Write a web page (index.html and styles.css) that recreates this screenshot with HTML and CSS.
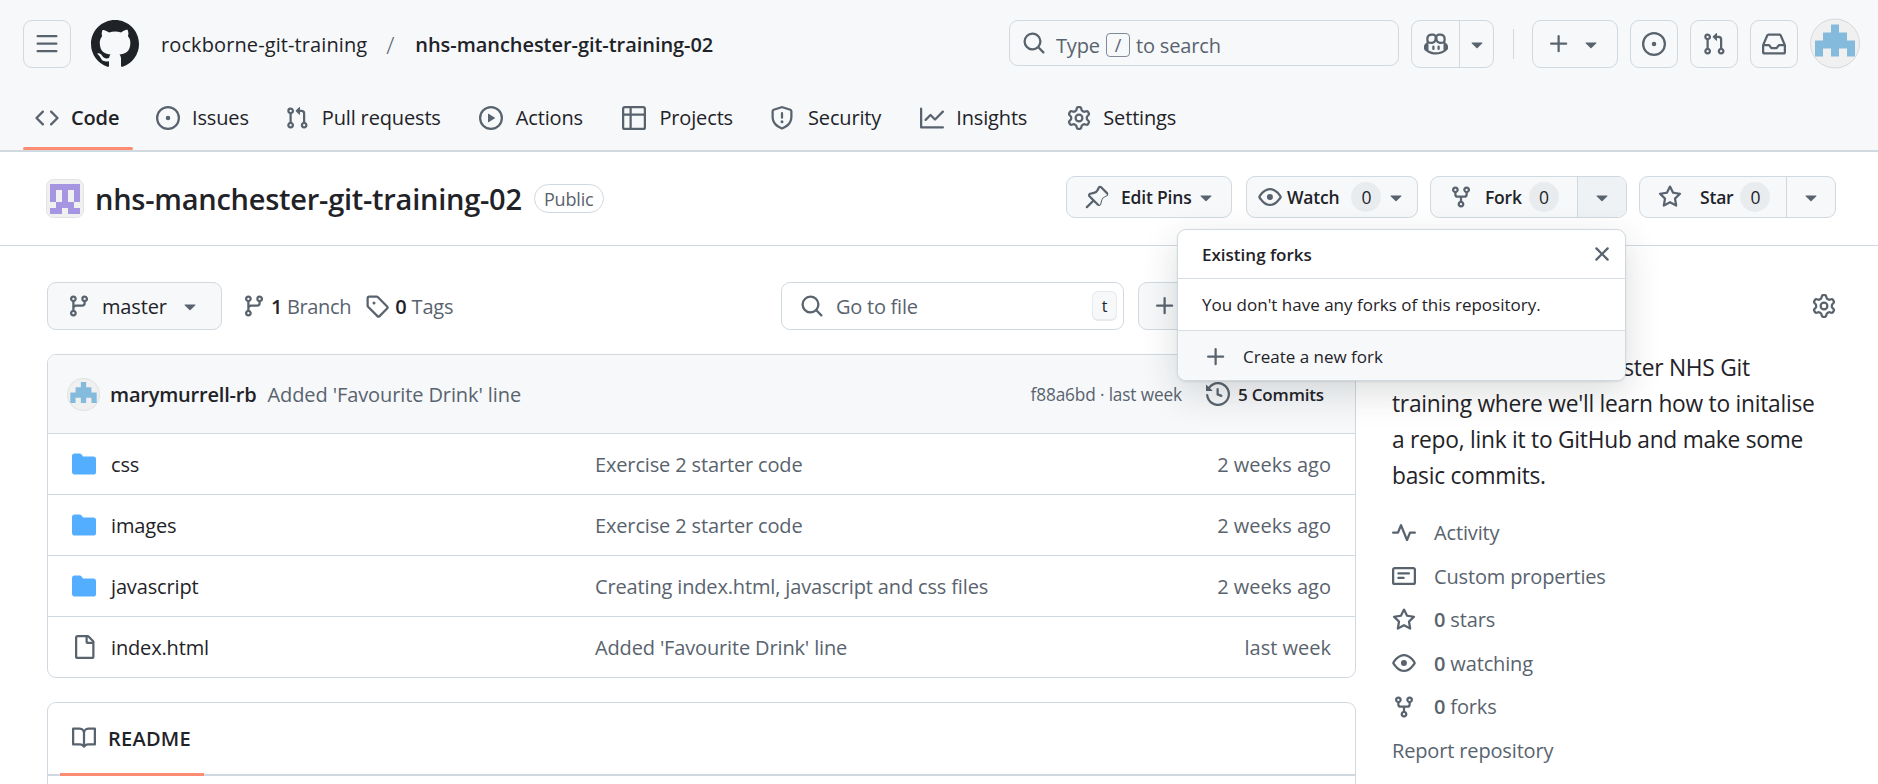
FILE: index.html
```html
<!DOCTYPE html>
<html lang="en">
<head>
<meta charset="utf-8">
<title>nhs-manchester-git-training-02</title>
<link rel="stylesheet" href="styles.css">
</head>
<body>
<svg class="sprite" width="0" height="0" aria-hidden="true">
<defs>
<symbol id="bars" viewBox="0 0 16 16"><path d="M1 2.75A.75.75 0 0 1 1.75 2h12.5a.75.75 0 0 1 0 1.5H1.75A.75.75 0 0 1 1 2.75Zm0 5A.75.75 0 0 1 1.75 7h12.5a.75.75 0 0 1 0 1.5H1.75A.75.75 0 0 1 1 7.75ZM1.75 12h12.5a.75.75 0 0 1 0 1.5H1.75a.75.75 0 0 1 0-1.5Z"/></symbol>
<symbol id="mark" viewBox="0 0 16 16"><path d="M8 0c4.42 0 8 3.58 8 8a8.013 8.013 0 0 1-5.45 7.59c-.4.08-.55-.17-.55-.38 0-.27.01-1.13.01-2.2 0-.75-.25-1.23-.54-1.48 1.78-.2 3.65-.88 3.65-3.95 0-.88-.31-1.59-.82-2.15.08-.2.36-1.02-.08-2.12 0 0-.67-.22-2.2.82-.64-.18-1.32-.27-2-.27-.68 0-1.36.09-2 .27-1.53-1.03-2.2-.82-2.2-.82-.44 1.1-.16 1.92-.08 2.12-.51.56-.82 1.28-.82 2.15 0 3.06 1.86 3.75 3.64 3.95-.23.2-.44.55-.51 1.07-.46.21-1.61.55-2.33-.66-.15-.24-.6-.83-1.23-.82-.67.01-.27.38.01.53.34.19.73.9.82 1.13.16.45.68 1.31 2.69.94 0 .67.01 1.3.01 1.49 0 .21-.15.45-.55.38A7.995 7.995 0 0 1 0 8c0-4.42 3.58-8 8-8Z"/></symbol>
<symbol id="search" viewBox="0 0 16 16"><path d="M10.68 11.74a6 6 0 0 1-7.922-8.982 6 6 0 0 1 8.982 7.922l3.04 3.04a.749.749 0 0 1-.326 1.275.749.749 0 0 1-.734-.215ZM11.5 7a4.499 4.499 0 1 0-8.997 0A4.499 4.499 0 0 0 11.5 7Z"/></symbol>
<symbol id="code" viewBox="0 0 16 16"><path d="m11.28 3.22 4.25 4.25a.75.75 0 0 1 0 1.06l-4.25 4.25a.749.749 0 0 1-1.275-.326.749.749 0 0 1 .215-.734L13.94 8l-3.72-3.72a.749.749 0 0 1 .326-1.275.749.749 0 0 1 .734.215Zm-6.56 0a.751.751 0 0 1 1.042.018.751.751 0 0 1 .018 1.042L2.06 8l3.72 3.72a.749.749 0 0 1-.326 1.275.749.749 0 0 1-.734-.215L.47 8.53a.75.75 0 0 1 0-1.06Z"/></symbol>
<symbol id="issue" viewBox="0 0 16 16"><path d="M8 9.5a1.5 1.5 0 1 0 0-3 1.5 1.5 0 0 0 0 3Z"/><path d="M8 0a8 8 0 1 1 0 16A8 8 0 0 1 8 0ZM1.5 8a6.5 6.5 0 1 0 13 0 6.5 6.5 0 0 0-13 0Z"/></symbol>
<symbol id="pr" viewBox="0 0 16 16"><path d="M1.5 3.25a2.25 2.25 0 1 1 3 2.122v5.256a2.251 2.251 0 1 1-1.5 0V5.372A2.25 2.25 0 0 1 1.5 3.25Zm5.677-.177L9.573.677A.25.25 0 0 1 10 .854V2.5h1A2.5 2.5 0 0 1 13.5 5v5.628a2.251 2.251 0 1 1-1.5 0V5a1 1 0 0 0-1-1h-1v1.646a.25.25 0 0 1-.427.177L7.177 3.427a.25.25 0 0 1 0-.354ZM3.75 2.5a.75.75 0 1 0 0 1.5.75.75 0 0 0 0-1.5Zm0 9.5a.75.75 0 1 0 0 1.5.75.75 0 0 0 0-1.5Zm8.25.75a.75.75 0 1 0 1.5 0 .75.75 0 0 0-1.5 0Z"/></symbol>
<symbol id="play" viewBox="0 0 16 16"><path d="M8 0a8 8 0 1 1 0 16A8 8 0 0 1 8 0ZM1.5 8a6.5 6.5 0 1 0 13 0 6.5 6.5 0 0 0-13 0Zm4.879-2.773 4.264 2.559a.25.25 0 0 1 0 .428l-4.264 2.559A.25.25 0 0 1 6 10.559V5.442a.25.25 0 0 1 .379-.215Z"/></symbol>
<symbol id="table" viewBox="0 0 16 16"><path d="M0 1.75C0 .784.784 0 1.75 0h12.5C15.216 0 16 .784 16 1.75v12.5A1.75 1.75 0 0 1 14.25 16H1.75A1.75 1.75 0 0 1 0 14.25ZM6.5 6.5v8h7.75a.25.25 0 0 0 .25-.25V6.5Zm8-1.5V1.75a.25.25 0 0 0-.25-.25H6.5V5Zm-13 1.5v7.75c0 .138.112.25.25.25H5v-8ZM5 5V1.5H1.75a.25.25 0 0 0-.25.25V5Z"/></symbol>
<symbol id="shield" viewBox="0 0 16 16"><path d="M7.467.133a1.748 1.748 0 0 1 1.066 0l5.25 1.68A1.75 1.75 0 0 1 15 3.48V7c0 1.566-.32 3.182-1.303 4.682-.983 1.498-2.585 2.813-5.032 3.855a1.697 1.697 0 0 1-1.33 0c-2.447-1.042-4.049-2.357-5.032-3.855C1.32 10.182 1 8.566 1 7V3.48a1.75 1.75 0 0 1 1.217-1.667Zm.61 1.429a.25.25 0 0 0-.153 0l-5.25 1.68a.25.25 0 0 0-.174.238V7c0 1.358.275 2.666 1.057 3.86.784 1.194 2.121 2.34 4.366 3.297a.196.196 0 0 0 .154 0c2.245-.956 3.582-2.104 4.366-3.298C13.225 9.666 13.5 8.36 13.5 7V3.48a.251.251 0 0 0-.174-.237l-5.25-1.68ZM8.75 4.75v3a.75.75 0 0 1-1.5 0v-3a.75.75 0 0 1 1.5 0ZM9 10.5a1 1 0 1 1-2 0 1 1 0 0 1 2 0Z"/></symbol>
<symbol id="graph" viewBox="0 0 16 16"><path d="M1.5 1.75V13.5h13.75a.75.75 0 0 1 0 1.5H.75a.75.75 0 0 1-.75-.75V1.75a.75.75 0 0 1 1.5 0Zm14.28 2.53-5.25 5.25a.75.75 0 0 1-1.06 0L7 7.06 4.28 9.78a.751.751 0 0 1-1.042-.018.751.751 0 0 1-.018-1.042l3.25-3.25a.75.75 0 0 1 1.06 0L10 7.94l4.72-4.72a.751.751 0 0 1 1.042.018.751.751 0 0 1 .018 1.042Z"/></symbol>
<symbol id="gear" viewBox="0 0 16 16"><path d="M8 0a8.2 8.2 0 0 1 .701.031C9.444.095 9.99.645 10.16 1.29l.288 1.107c.018.066.079.158.212.224.231.114.454.243.668.386.123.082.233.09.299.071l1.103-.303c.644-.176 1.392.021 1.82.63.27.385.506.792.704 1.218.315.675.111 1.422-.364 1.891l-.814.806c-.049.048-.098.147-.088.294.016.257.016.515 0 .772-.01.147.038.246.088.294l.814.806c.475.469.679 1.216.364 1.891a7.977 7.977 0 0 1-.704 1.217c-.428.61-1.176.807-1.82.63l-1.102-.302c-.067-.019-.177-.011-.3.071a5.909 5.909 0 0 1-.668.386c-.133.066-.194.158-.211.224l-.29 1.106c-.168.646-.715 1.196-1.458 1.26a8.006 8.006 0 0 1-1.402 0c-.743-.064-1.289-.614-1.458-1.26l-.289-1.106c-.018-.066-.079-.158-.212-.224a5.738 5.738 0 0 1-.668-.386c-.123-.082-.233-.09-.299-.071l-1.103.303c-.644.176-1.392-.021-1.82-.63a8.12 8.12 0 0 1-.704-1.218c-.315-.675-.111-1.422.363-1.891l.815-.806c.05-.048.098-.147.088-.294a6.214 6.214 0 0 1 0-.772c.01-.147-.038-.246-.088-.294l-.815-.806C.635 6.045.431 5.298.746 4.623a7.92 7.92 0 0 1 .704-1.217c.428-.61 1.176-.807 1.82-.63l1.102.302c.067.019.177.011.3-.071.214-.143.437-.272.668-.386.133-.066.194-.158.211-.224l.29-1.106C6.009.645 6.556.095 7.299.03 7.53.01 7.764 0 8 0Zm-.571 1.525c-.036.003-.108.036-.137.146l-.289 1.105c-.147.561-.549.967-.998 1.189-.173.086-.34.183-.5.29-.417.278-.97.423-1.529.27l-1.103-.303c-.109-.03-.175.016-.195.045-.22.312-.412.644-.573.99-.014.031-.021.11.059.19l.815.806c.411.406.562.957.53 1.456a4.709 4.709 0 0 0 0 .582c.032.499-.119 1.05-.53 1.456l-.815.806c-.081.08-.073.159-.059.19.162.346.353.677.573.989.02.03.085.076.195.046l1.102-.303c.56-.153 1.113-.008 1.53.27.161.107.328.204.501.29.447.222.85.629.997 1.189l.289 1.105c.029.109.101.143.137.146a6.6 6.6 0 0 0 1.142 0c.036-.003.108-.036.137-.146l.289-1.105c.147-.561.549-.967.998-1.189.173-.086.34-.183.5-.29.417-.278.97-.423 1.529-.27l1.103.303c.109.029.175-.016.195-.045.22-.313.411-.644.573-.99.014-.031.021-.11-.059-.19l-.815-.806c-.411-.406-.562-.957-.53-1.456a4.709 4.709 0 0 0 0-.582c-.032-.499.119-1.05.53-1.456l.815-.806c.081-.08.073-.159.059-.19a6.464 6.464 0 0 0-.573-.989c-.02-.03-.085-.076-.195-.046l-1.102.303c-.56.153-1.113.008-1.53-.27a4.44 4.44 0 0 0-.501-.29c-.447-.222-.85-.629-.997-1.189l-.289-1.105c-.029-.11-.101-.143-.137-.146a6.6 6.6 0 0 0-1.142 0ZM11 8a3 3 0 1 1-6 0 3 3 0 0 1 6 0ZM9.5 8a1.5 1.5 0 1 0-3.001.001A1.5 1.5 0 0 0 9.5 8Z"/></symbol>
<symbol id="plus" viewBox="0 0 16 16"><path d="M7.75 2a.75.75 0 0 1 .75.75V7h4.25a.75.75 0 0 1 0 1.5H8.5v4.25a.75.75 0 0 1-1.5 0V8.5H2.75a.75.75 0 0 1 0-1.5H7V2.75A.75.75 0 0 1 7.75 2Z"/></symbol>
<symbol id="tri" viewBox="0 0 16 16"><path d="m4.427 7.427 3.396 3.396a.25.25 0 0 0 .354 0l3.396-3.396A.25.25 0 0 0 11.396 7H4.604a.25.25 0 0 0-.177.427Z"/></symbol>
<symbol id="inbox" viewBox="0 0 16 16"><path d="M2.8 2.06A1.75 1.75 0 0 1 4.41 1h7.18c.7 0 1.333.417 1.61 1.06l2.74 6.395c.04.093.06.194.06.295v4.5A1.75 1.75 0 0 1 14.25 15H1.75A1.75 1.75 0 0 1 0 13.25v-4.5c0-.101.02-.202.06-.295Zm1.61.44a.25.25 0 0 0-.23.152L1.887 8H4.75a.75.75 0 0 1 .6.3L6.625 10h2.75l1.275-1.7a.75.75 0 0 1 .6-.3h2.863L11.82 2.652a.25.25 0 0 0-.23-.152Zm10.09 7h-2.875l-1.275 1.7a.75.75 0 0 1-.6.3h-3.5a.75.75 0 0 1-.6-.3L4.375 9.5H1.5v3.75c0 .138.112.25.25.25h12.5a.25.25 0 0 0 .25-.25Z"/></symbol>
<symbol id="copilot" viewBox="0 0 16 16"><path d="M7.998 15.035c-4.562 0-7.873-2.914-7.998-3.749V9.338c.085-.628.677-1.686 1.588-2.065.013-.07.024-.143.036-.218.029-.183.06-.384.126-.612-.201-.508-.254-1.084-.254-1.656 0-.87.128-1.769.693-2.484.579-.733 1.494-1.124 2.724-1.261 1.206-.134 2.262.034 2.944.765.05.053.096.108.139.165.044-.057.094-.112.143-.165.682-.731 1.738-.899 2.944-.765 1.23.137 2.145.528 2.724 1.261.566.715.693 1.614.693 2.484 0 .572-.053 1.148-.254 1.656.066.228.098.429.126.612.012.076.024.148.037.218.924.385 1.522 1.471 1.591 2.095v1.872c0 .766-3.351 3.795-8.002 3.795Zm0-1.485c2.28 0 4.584-1.11 5.002-1.433V7.862l-.023-.116c-.49.21-1.075.291-1.727.291-1.146 0-2.059-.327-2.71-.991A3.222 3.222 0 0 1 8 6.303a3.24 3.24 0 0 1-.544.743c-.65.664-1.563.991-2.71.991-.652 0-1.236-.081-1.727-.291l-.023.116v4.255c.419.323 2.722 1.433 5.002 1.433ZM6.762 2.83c-.193-.206-.637-.413-1.682-.297-1.019.113-1.479.404-1.713.7-.247.312-.369.789-.369 1.554 0 .793.129 1.171.308 1.371.162.181.519.379 1.442.379.853 0 1.339-.235 1.638-.54.315-.322.527-.827.617-1.553.117-.935-.037-1.395-.241-1.614Zm4.155-.297c-1.044-.116-1.488.091-1.681.297-.204.219-.359.679-.242 1.614.091.726.303 1.231.618 1.553.299.305.784.54 1.638.54.922 0 1.28-.198 1.442-.379.179-.2.308-.578.308-1.371 0-.765-.123-1.242-.37-1.554-.233-.296-.693-.587-1.713-.7Z"/><path d="M6.25 9.037a.75.75 0 0 1 .75.75v1.501a.75.75 0 0 1-1.5 0V9.787a.75.75 0 0 1 .75-.75Zm4.25.75v1.501a.75.75 0 0 1-1.5 0V9.787a.75.75 0 0 1 1.5 0Z"/></symbol>
<symbol id="pin" viewBox="0 0 16 16"><path d="m11.294.984 3.722 3.722a1.75 1.75 0 0 1-.504 2.826l-1.327.613a3.089 3.089 0 0 0-1.707 2.084l-.584 2.454c-.317 1.332-1.972 1.8-2.94.832L5.75 11.311 1.78 15.28a.749.749 0 0 1-1.275-.326.749.749 0 0 1 .215-.734L4.69 10.25 2.487 8.047c-.968-.968-.5-2.623.832-2.94l2.454-.584a3.08 3.08 0 0 0 2.084-1.707l.613-1.327a1.75 1.75 0 0 1 2.824-.505Zm-1.06 1.06a.25.25 0 0 0-.404.072l-.613 1.327a4.58 4.58 0 0 1-3.098 2.537l-2.454.584a.25.25 0 0 0-.119.42l6.13 6.13a.25.25 0 0 0 .42-.119l.584-2.454a4.58 4.58 0 0 1 2.537-3.098l1.327-.613a.25.25 0 0 0 .072-.404Z"/></symbol>
<symbol id="eye" viewBox="0 0 16 16"><path d="M8 2c1.981 0 3.671.992 4.933 2.078 1.27 1.091 2.187 2.345 2.637 3.023a1.62 1.62 0 0 1 0 1.798c-.45.678-1.367 1.932-2.637 3.023C11.67 13.008 9.981 14 8 14c-1.981 0-3.671-.992-4.933-2.078C1.797 10.83.88 9.576.43 8.898a1.62 1.62 0 0 1 0-1.798c.45-.677 1.367-1.931 2.637-3.022C4.33 2.992 6.019 2 8 2ZM1.679 7.932a.12.12 0 0 0 0 .136c.411.622 1.241 1.75 2.366 2.717C5.176 11.758 6.527 12.5 8 12.5c1.473 0 2.825-.742 3.955-1.715 1.124-.967 1.954-2.096 2.366-2.717a.12.12 0 0 0 0-.136c-.412-.621-1.242-1.75-2.366-2.717C10.824 4.242 9.473 3.5 8 3.5c-1.473 0-2.825.742-3.955 1.715-1.124.967-1.954 2.096-2.366 2.717ZM8 10a2 2 0 1 1-.001-3.999A2 2 0 0 1 8 10Z"/></symbol>
<symbol id="fork" viewBox="0 0 16 16"><path d="M5 5.372v.878c0 .414.336.75.75.75h4.5a.75.75 0 0 0 .75-.75v-.878a2.25 2.25 0 1 1 1.5 0v.878a2.25 2.25 0 0 1-2.25 2.25h-1.5v2.128a2.251 2.251 0 1 1-1.5 0V8.5h-1.5A2.25 2.25 0 0 1 3.5 6.25v-.878a2.25 2.25 0 1 1 1.5 0ZM5 3.25a.75.75 0 1 0-1.5 0 .75.75 0 0 0 1.5 0Zm6.75.75a.75.75 0 1 0 0-1.5.75.75 0 0 0 0 1.5Zm-3 8.75a.75.75 0 1 0-1.5 0 .75.75 0 0 0 1.5 0Z"/></symbol>
<symbol id="star" viewBox="0 0 16 16"><path d="M8 .25a.75.75 0 0 1 .673.418l1.882 3.815 4.21.612a.75.75 0 0 1 .416 1.279l-3.046 2.97.719 4.192a.751.751 0 0 1-1.088.791L8 12.347l-3.766 1.98a.75.75 0 0 1-1.088-.79l.72-4.194L.818 6.374a.75.75 0 0 1 .416-1.28l4.21-.611L7.327.668A.75.75 0 0 1 8 .25Zm0 2.445L6.615 5.5a.75.75 0 0 1-.564.41l-3.097.45 2.24 2.184a.75.75 0 0 1 .216.664l-.528 3.084 2.769-1.456a.75.75 0 0 1 .698 0l2.77 1.456-.53-3.084a.75.75 0 0 1 .216-.664l2.24-2.183-3.096-.45a.75.75 0 0 1-.564-.41L8 2.694Z"/></symbol>
<symbol id="x" viewBox="0 0 16 16"><path d="M3.72 3.72a.75.75 0 0 1 1.06 0L8 6.94l3.22-3.22a.749.749 0 0 1 1.275.326.749.749 0 0 1-.215.734L9.06 8l3.22 3.22a.749.749 0 0 1-.326 1.275.749.749 0 0 1-.734-.215L8 9.06l-3.22 3.22a.751.751 0 0 1-1.042-.018.751.751 0 0 1-.018-1.042L6.94 8 3.72 4.78a.75.75 0 0 1 0-1.06Z"/></symbol>
<symbol id="branch" viewBox="0 0 16 16"><path d="M9.5 3.25a2.25 2.25 0 1 1 3 2.122V6A2.5 2.5 0 0 1 10 8.5H6a1 1 0 0 0-1 1v1.128a2.251 2.251 0 1 1-1.5 0V5.372a2.25 2.25 0 1 1 1.5 0v1.836A2.493 2.493 0 0 1 6 7h4a1 1 0 0 0 1-1v-.628A2.25 2.25 0 0 1 9.5 3.25Zm-6 0a.75.75 0 1 0 1.5 0 .75.75 0 0 0-1.5 0Zm8.25-.75a.75.75 0 1 0 0 1.5.75.75 0 0 0 0-1.5ZM4.25 12a.75.75 0 1 0 0 1.5.75.75 0 0 0 0-1.5Z"/></symbol>
<symbol id="tag" viewBox="0 0 16 16"><path d="M1 7.775V2.75C1 1.784 1.784 1 2.75 1h5.025c.464 0 .91.184 1.238.513l6.25 6.25a1.75 1.75 0 0 1 0 2.474l-5.026 5.026a1.75 1.75 0 0 1-2.474 0l-6.25-6.25A1.752 1.752 0 0 1 1 7.775Zm1.5 0c0 .066.026.13.073.177l6.25 6.25a.25.25 0 0 0 .354 0l5.025-5.025a.25.25 0 0 0 0-.354l-6.25-6.25a.25.25 0 0 0-.177-.073H2.75a.25.25 0 0 0-.25.25ZM6 5a1 1 0 1 1 0 2 1 1 0 0 1 0-2Z"/></symbol>
<symbol id="history" viewBox="0 0 16 16"><path d="m.427 1.927 1.215 1.215a8.002 8.002 0 1 1-1.6 5.685.75.75 0 1 1 1.493-.154 6.5 6.5 0 1 0 1.18-4.458l1.358 1.358A.25.25 0 0 1 3.896 6H.25A.25.25 0 0 1 0 5.75V2.104a.25.25 0 0 1 .427-.177ZM7.75 4a.75.75 0 0 1 .75.75v2.992l2.028.812a.75.75 0 0 1-.557 1.392l-2.5-1A.751.751 0 0 1 7 8.25v-3.5A.75.75 0 0 1 7.75 4Z"/></symbol>
<symbol id="folder" viewBox="0 0 16 16"><path d="M1.75 1A1.75 1.75 0 0 0 0 2.75v10.5C0 14.216.784 15 1.75 15h12.5A1.75 1.75 0 0 0 16 13.25v-8.5A1.75 1.75 0 0 0 14.25 3H7.5a.25.25 0 0 1-.2-.1l-.9-1.2C6.07 1.26 5.55 1 5 1H1.75Z"/></symbol>
<symbol id="file" viewBox="0 0 16 16"><path d="M2 1.75C2 .784 2.784 0 3.75 0h6.586c.464 0 .909.184 1.237.513l2.914 2.914c.329.328.513.773.513 1.237v9.586A1.75 1.75 0 0 1 13.25 16h-9.5A1.75 1.75 0 0 1 2 14.25Zm1.75-.25a.25.25 0 0 0-.25.25v12.5c0 .138.112.25.25.25h9.5a.25.25 0 0 0 .25-.25V6h-2.75A1.75 1.75 0 0 1 9 4.25V1.5Zm6.75.062V4.25c0 .138.112.25.25.25h2.688l-.011-.013-2.914-2.914-.013-.011Z"/></symbol>
<symbol id="book" viewBox="0 0 16 16"><path d="M0 1.75A.75.75 0 0 1 .75 1h4.253c1.227 0 2.317.59 3 1.501A3.743 3.743 0 0 1 11.006 1h4.245a.75.75 0 0 1 .75.75v10.5a.75.75 0 0 1-.75.75h-4.507a2.25 2.25 0 0 0-1.591.659l-.622.621a.75.75 0 0 1-1.06 0l-.622-.621A2.25 2.25 0 0 0 5.258 13H.75a.75.75 0 0 1-.75-.75Zm7.251 10.324.004-5.073-.002-2.253A2.25 2.25 0 0 0 5.003 2.5H1.5v9h3.757a3.75 3.75 0 0 1 1.994.574ZM8.755 4.75l-.004 7.322a3.752 3.752 0 0 1 1.992-.572H14.5v-9h-3.495a2.25 2.25 0 0 0-2.25 2.25Z"/></symbol>
<symbol id="pulse" viewBox="0 0 16 16"><path d="M6 2c.306 0 .582.187.696.471L10 10.731l1.304-3.26A.751.751 0 0 1 12 7h3.25a.75.75 0 0 1 0 1.5h-2.742l-1.812 4.528a.751.751 0 0 1-1.392 0L6 4.77 4.696 8.03A.75.75 0 0 1 4 8.5H.75a.75.75 0 0 1 0-1.5h2.742l1.812-4.529A.751.751 0 0 1 6 2Z"/></symbol>
<symbol id="note" viewBox="0 0 16 16"><path d="M0 3.75C0 2.784.784 2 1.75 2h12.5c.966 0 1.75.784 1.75 1.75v8.5A1.75 1.75 0 0 1 14.25 14H1.75A1.75 1.75 0 0 1 0 12.25Zm1.75-.25a.25.25 0 0 0-.25.25v8.5c0 .138.112.25.25.25h12.5a.25.25 0 0 0 .25-.25v-8.5a.25.25 0 0 0-.25-.25ZM3.5 6.25a.75.75 0 0 1 .75-.75h7a.75.75 0 0 1 0 1.5h-7a.75.75 0 0 1-.75-.75ZM4.25 8.5h3.5a.75.75 0 0 1 0 1.5h-3.5a.75.75 0 0 1 0-1.5Z"/></symbol>
<symbol id="identicon-blue" viewBox="0 0 50 50"><circle cx="25" cy="25" r="24.5" fill="#f0f0f0" stroke="#d5d8da"/><path fill="#84bbdc" d="M21 6h8v8h8v8h8v16h-8v-8h-8v8h-8v-8h-8v8H5V22h8v-8h8Z"/></symbol>
<symbol id="identicon-purple" viewBox="0 0 38 39"><rect x=".5" y=".5" width="37" height="38" rx="7" fill="#f0f0f0" stroke="#e1e4e8"/><path fill="#a695e0" d="M4 5h30v6H4zM4 11h6v12H4zM16 11h6v12h-6zM28 11h6v12h-6zM10 23h18v6H10zM4 29h12v6H4zM22 29h12v6H22z"/></symbol>
</defs>
</svg>

<header class="app-header">
  <div class="top-row">
    <button class="icon-btn menu-btn" type="button"><svg class="ic"><use href="#bars"/></svg></button>
    <svg class="logo"><use href="#mark"/></svg>
    <nav class="crumbs">
      <span class="crumb-owner">rockborne-git-training</span>
      <span class="crumb-sep">/</span>
      <span class="crumb-repo">nhs-manchester-git-training-02</span>
    </nav>
    <div class="search-box">
      <svg class="ic"><use href="#search"/></svg>
      <span class="search-text">Type <kbd class="slash">/</kbd> to search</span>
    </div>
    <div class="copilot-group">
      <span class="cop-main"><svg class="ic"><use href="#copilot"/></svg></span>
      <span class="cop-drop"><svg class="ic"><use href="#tri"/></svg></span>
    </div>
    <span class="top-sep"></span>
    <button class="icon-btn plus-btn" type="button"><svg class="ic"><use href="#plus"/></svg><svg class="ic"><use href="#tri"/></svg></button>
    <button class="icon-btn" type="button"><svg class="ic"><use href="#issue"/></svg></button>
    <button class="icon-btn" type="button"><svg class="ic"><use href="#pr"/></svg></button>
    <button class="icon-btn" type="button"><svg class="ic"><use href="#inbox"/></svg></button>
    <svg class="user-avatar"><use href="#identicon-blue"/></svg>
  </div>
  <nav class="tabs">
    <a class="tab tab-active"><svg class="ic"><use href="#code"/></svg><span>Code</span></a>
    <a class="tab"><svg class="ic"><use href="#issue"/></svg><span>Issues</span></a>
    <a class="tab"><svg class="ic"><use href="#pr"/></svg><span>Pull requests</span></a>
    <a class="tab"><svg class="ic"><use href="#play"/></svg><span>Actions</span></a>
    <a class="tab"><svg class="ic"><use href="#table"/></svg><span>Projects</span></a>
    <a class="tab"><svg class="ic"><use href="#shield"/></svg><span>Security</span></a>
    <a class="tab"><svg class="ic"><use href="#graph"/></svg><span>Insights</span></a>
    <a class="tab"><svg class="ic"><use href="#gear"/></svg><span>Settings</span></a>
  </nav>
</header>

<section class="repo-head">
  <svg class="repo-avatar"><use href="#identicon-purple"/></svg>
  <h1 class="repo-name">nhs-manchester-git-training-02</h1>
  <span class="public-badge">Public</span>
  <div class="repo-actions">
    <button class="act-btn pins-btn" type="button"><svg class="ic"><use href="#pin"/></svg><span class="act-label">Edit Pins</span><svg class="ic tri"><use href="#tri"/></svg></button>
    <button class="act-btn watch-btn" type="button"><svg class="ic"><use href="#eye"/></svg><span class="act-label">Watch</span><span class="count">0</span><svg class="ic tri"><use href="#tri"/></svg></button>
    <div class="split fork-split">
      <button class="split-main" type="button"><svg class="ic"><use href="#fork"/></svg><span class="act-label">Fork</span><span class="count">0</span></button>
      <button class="split-drop split-open" type="button"><svg class="ic tri"><use href="#tri"/></svg></button>
    </div>
    <div class="split star-split">
      <button class="split-main" type="button"><svg class="ic"><use href="#star"/></svg><span class="act-label">Star</span><span class="count">0</span></button>
      <button class="split-drop" type="button"><svg class="ic tri"><use href="#tri"/></svg></button>
    </div>
  </div>
  <div class="fork-pop">
    <div class="pop-head"><span class="pop-title">Existing forks</span><svg class="ic"><use href="#x"/></svg></div>
    <div class="pop-body">You don't have any forks of this repository.</div>
    <div class="pop-foot"><svg class="ic"><use href="#plus"/></svg><span>Create a new fork</span></div>
  </div>
</section>

<main class="layout">
  <div class="main-col">
    <div class="file-nav">
      <button class="branch-btn" type="button"><svg class="ic"><use href="#branch"/></svg><span class="branch-name">master</span><svg class="ic tri"><use href="#tri"/></svg></button>
      <span class="nav-stat stat-branch"><svg class="ic"><use href="#branch"/></svg><span><b>1</b> Branch</span></span>
      <span class="nav-stat stat-tag"><svg class="ic"><use href="#tag"/></svg><span><b>0</b> Tags</span></span>
      <div class="goto">
        <svg class="ic"><use href="#search"/></svg>
        <span class="goto-text">Go to file</span>
        <kbd class="goto-key">t</kbd>
      </div>
      <button class="add-btn" type="button"><svg class="ic"><use href="#plus"/></svg></button>
    </div>

    <div class="file-table">
      <div class="commit-row">
        <svg class="commit-avatar"><use href="#identicon-blue"/></svg>
        <span class="commit-author">marymurrell-rb</span>
        <span class="commit-msg">Added 'Favourite Drink' line</span>
        <span class="commit-meta">f88a6bd · last week</span>
        <span class="commit-count"><svg class="ic"><use href="#history"/></svg><span>5 Commits</span></span>
      </div>
      <div class="file-row"><svg class="ic folder"><use href="#folder"/></svg><span class="file-name">css</span><span class="file-msg">Exercise 2 starter code</span><span class="file-date">2 weeks ago</span></div>
      <div class="file-row"><svg class="ic folder"><use href="#folder"/></svg><span class="file-name">images</span><span class="file-msg">Exercise 2 starter code</span><span class="file-date">2 weeks ago</span></div>
      <div class="file-row"><svg class="ic folder"><use href="#folder"/></svg><span class="file-name">javascript</span><span class="file-msg">Creating index.html, javascript and css files</span><span class="file-date">2 weeks ago</span></div>
      <div class="file-row"><svg class="ic"><use href="#file"/></svg><span class="file-name">index.html</span><span class="file-msg">Added 'Favourite Drink' line</span><span class="file-date">last week</span></div>
    </div>

    <div class="readme">
      <div class="readme-head"><a class="readme-tab"><svg class="ic"><use href="#book"/></svg><span>README</span></a></div>
    </div>
  </div>

  <aside class="side-col">
    <div class="about-head"><svg class="ic"><use href="#gear"/></svg></div>
    <p class="about-text">Resources for Manchester NHS Git<br>training where we'll learn how to initalise<br>a repo, link it to GitHub and make some<br>basic commits.</p>
    <ul class="side-list">
      <li class="side-item"><svg class="ic"><use href="#pulse"/></svg><span>Activity</span></li>
      <li class="side-item"><svg class="ic"><use href="#note"/></svg><span>Custom properties</span></li>
      <li class="side-item"><svg class="ic"><use href="#star"/></svg><span><b>0</b> stars</span></li>
      <li class="side-item"><svg class="ic"><use href="#eye"/></svg><span><b>0</b> watching</span></li>
      <li class="side-item"><svg class="ic"><use href="#fork"/></svg><span><b>0</b> forks</span></li>
      <li class="side-item report">Report repository</li>
    </ul>
  </aside>
</main>
</body>
</html>
```

FILE: styles.css
```css
* { box-sizing: border-box; }
html, body { margin: 0; height: 784px; overflow: hidden; }
body {
  font-family: "Open Sans", "Noto Sans", sans-serif;
  font-size: 20px;
  letter-spacing: -0.15px;
  color: #1f2328;
  background: #fff;
}
button { font: inherit; letter-spacing: inherit; color: inherit; background: none; padding: 0; cursor: pointer; }
h1, h2, p, ul { margin: 0; padding: 0; }
ul { list-style: none; }
b { font-weight: 600; }
.sprite { position: absolute; }
.ic { width: 24px; height: 24px; fill: #59636e; flex: none; display: block; }
.tri { width: 24px; height: 24px; }

/* header */
.app-header { height: 152px; background: #f6f8fa; border-bottom: 2px solid #d1d9e0; }
.top-row { height: 88px; padding: 20px 0 0 23px; display: flex; align-items: flex-start; }
.icon-btn {
  width: 48px; height: 48px; border: 1px solid #d1d9e0; border-radius: 9px; flex: none;
  display: flex; align-items: center; justify-content: center; margin-right: 12px;
}
.menu-btn { margin-right: 20px; }
.logo { width: 48px; height: 48px; fill: #1f2328; flex: none; }
.crumbs { display: flex; align-items: center; height: 48px; margin-left: 22px; width: 848px; flex: none; }
.crumb-owner { letter-spacing: 0.1px; }
.crumb-sep { margin: 0 21px 0 19px; color: #59636e; font-size: 24px; font-weight: 300; }
.crumb-repo { font-weight: 600; letter-spacing: -0.05px; }
.search-box {
  width: 390px; height: 46px; border: 1px solid #d1d9e0; border-radius: 9px;
  display: flex; align-items: center; padding-left: 12px; color: #59636e; flex: none;
}
.search-text { margin-left: 10px; display: flex; align-items: center; gap: 6px; position: relative; top: 2px; }
.slash {
  display: inline-flex; width: 24px; height: 24px; border: 1px solid #818b98; border-radius: 4px;
  align-items: center; justify-content: center; font: inherit; font-size: 18px;
}
.copilot-group { display: flex; width: 83px; height: 48px; margin-left: 12px; border: 1px solid #d1d9e0; border-radius: 9px; flex: none; }
.cop-main { width: 48px; display: flex; align-items: center; justify-content: center; border-right: 1px solid #d1d9e0; }
.cop-drop { flex: 1; display: flex; align-items: center; justify-content: center; }
.top-sep { width: 1px; height: 30px; margin: 9px 18px 0 19px; background: #d1d9e0; flex: none; }
.plus-btn { width: 86px; gap: 8px; }
.user-avatar { width: 50px; height: 51px; margin: -2px 0 0 0; flex: none; }
.tabs { display: flex; height: 62px; padding-left: 23px; }
.tab { display: flex; align-items: center; gap: 12px; height: 62px; padding: 0 13px 3px; position: relative; }
.tab-active { font-weight: 600; width: 110px; padding-left: 12px; }
.tab-active::after {
  content: ""; position: absolute; left: 0; right: 0; bottom: 0; height: 3px;
  background: #fd8c73; border-radius: 3px;
}
.tab:nth-child(2) { margin-left: 10px; }
.tab:nth-child(3) { margin-left: 10px; gap: 13px; }
.tab:nth-child(4) { margin-left: 12px; gap: 13px; }
.tab:nth-child(5) { margin-left: 13.5px; gap: 13px; }
.tab:nth-child(6) { margin-left: 11px; gap: 14px; }
.tab:nth-child(7) { margin-left: 13px; }
.tab:nth-child(8) { margin-left: 14px; }

/* repo head */
.repo-head { height: 94px; border-bottom: 1px solid #d1d9e0; display: flex; align-items: flex-start; padding: 24px 42px 0 46px; position: relative; }
.repo-avatar { width: 38px; height: 39px; margin-top: 3px; flex: none; }
.repo-name { font-size: 29px; font-weight: 600; letter-spacing: -0.25px; margin-left: 11px; line-height: 46px; }
.public-badge {
  margin: 8px 0 0 12px; height: 29px; width: 70px; border: 1px solid #d1d9e0; border-radius: 15px;
  font-size: 18px; font-weight: 500; color: #59636e; display: flex; align-items: center; justify-content: center;
}
.repo-actions { margin-left: auto; display: flex; gap: 12px; font-size: 17.5px; letter-spacing: -0.2px; }
.act-btn, .split { height: 42px; border: 1px solid #d1d9e0; border-radius: 9px; background: #f6f8fa; display: flex; align-items: center; flex: none; font-weight: 600; }
.pins-btn { width: 166px; padding-left: 18px; margin-right: 2px; }
.pins-btn .act-label { margin-left: 12px; }
.pins-btn .tri { margin-left: 3px; }
.watch-btn { width: 172px; padding-left: 11px; }
.watch-btn .act-label { margin-left: 5px; }
.watch-btn .count { margin: 0 0 0 12px; }
.watch-btn .tri { margin-left: 3px; }
.count { width: 30px; height: 30px; border-radius: 15px; background: #e9ecef; display: flex; align-items: center; justify-content: center; font-weight: 500; }
.split-main { flex: 1; height: 100%; border: 0; display: flex; align-items: center; font-weight: 600; }
.split-drop { height: 100%; border: 0; border-left: 1px solid #d1d9e0; display: flex; align-items: center; justify-content: center; border-radius: 0 8px 8px 0; }
.split-open { background: #eff2f5; }
.fork-split { width: 197px; }
.fork-split .split-main { padding-left: 18px; }
.fork-split .split-drop { width: 49px; }
.fork-split .act-label { margin-left: 12px; }
.fork-split .count { margin-left: 7px; }
.star-split { width: 197px; }
.star-split .split-main { padding-left: 18px; }
.star-split .split-drop { width: 49px; }
.star-split .act-label { margin-left: 18px; }
.star-split .count { margin-left: 7px; }

.fork-pop {
  position: absolute; left: 1177px; top: 77px; width: 449px; height: 152px; z-index: 5;
  background: #fff; border: 1px solid #d1d9e0; border-radius: 9px; overflow: hidden;
  box-shadow: 0 12px 36px rgba(37,41,46,.16), 0 1px 2px rgba(31,35,40,.1);
  font-size: 17px; letter-spacing: 0;
}
.pop-head { height: 49px; padding: 0 11px 0 24px; display: flex; align-items: center; justify-content: space-between; border-bottom: 1px solid #d8dee4; }
.pop-title { font-weight: 600; }
.pop-body { height: 52px; padding-left: 24px; display: flex; align-items: center; border-bottom: 1px solid #d8dee4; }
.pop-foot { height: 50px; background: #f6f8fa; display: flex; align-items: center; padding: 1px 0 0 26px; gap: 15px; color: #1f2328; }

/* layout */
.layout { display: grid; grid-template-columns: 1309px 443px; column-gap: 36px; padding: 36px 0 0 47px; }
.file-nav { display: flex; align-items: center; height: 48px; }
.branch-btn { width: 175px; height: 48px; border: 1px solid #d1d9e0; border-radius: 9px; background: #f6f8fa; display: flex; align-items: center; padding-left: 19px; flex: none; }
.branch-name { margin-left: 11px; font-weight: 500; flex: none; }
.branch-btn .tri { margin-left: 11px; }
.nav-stat { display: flex; align-items: center; color: #59636e; gap: 5px; flex: none; font-weight: 500; letter-spacing: -0.35px; }
.nav-stat b { color: #1f2328; }
.stat-branch { margin-left: 20px; }
.stat-tag { margin-left: 14px; gap: 6px; letter-spacing: -0.15px; }
.goto { margin-left: auto; width: 343px; height: 48px; border: 1px solid #d1d9e0; border-radius: 9px; display: flex; align-items: center; padding-left: 18px; color: #59636e; }
.goto-text { margin-left: 12px; letter-spacing: -0.25px; }
.goto-key { margin-left: auto; margin-right: 6px; width: 25px; height: 30px; border: 1px solid #e6e9ed; border-bottom-width: 2px; border-radius: 6px; background: #f6f8fa; display: flex; align-items: center; justify-content: center; font: inherit; font-size: 16px; color: #1f2328; }
.add-btn { margin-left: 14px; width: 218px; height: 48px; border: 1px solid #d1d9e0; border-radius: 9px; background: #f6f8fa; display: flex; align-items: center; padding-left: 14px; }

.file-table { margin-top: 24px; border: 1px solid #d1d9e0; border-radius: 9px; overflow: hidden; }
.commit-row { height: 78px; background: #f6f8fa; display: flex; align-items: center; padding-left: 19px; padding-right: 31px; }
.commit-avatar { width: 33px; height: 33px; flex: none; }
.commit-author { margin-left: 10px; font-weight: 600; letter-spacing: -0.2px; }
.commit-msg { margin-left: 11px; color: #59636e; letter-spacing: -0.1px; }
.commit-meta { margin-left: auto; font-size: 17.25px; letter-spacing: -0.15px; color: #59636e; }
.commit-count { margin-left: 24px; display: flex; align-items: center; gap: 8px; font-size: 17px; font-weight: 600; }
.file-row { height: 61px; border-top: 1px solid #d1d9e0; display: grid; grid-template-columns: 24px 499px 1fr auto; align-items: center; padding: 0 24px 0 24px; }
.folder { fill: #54aeff; }
.file-name { margin-left: 15px; }
.file-msg { color: #59636e; }
.file-date { color: #59636e; letter-spacing: 0; }

.readme { margin-top: 24px; height: 100px; border: 1px solid #d1d9e0; border-bottom: 0; border-radius: 9px 9px 0 0; }
.readme-head { height: 73px; border-bottom: 2px solid #d1d9e0; padding-left: 12px; }
.readme-tab { width: 144px; height: 73px; display: flex; align-items: center; gap: 12px; padding: 0 0 0 12px; font-weight: 600; letter-spacing: 0.25px; border-bottom: 3px solid #fd8c73; }

.about-head { height: 48px; display: flex; align-items: center; justify-content: flex-end; margin-right: -1px; }
.about-text { margin-top: 20px; font-size: 22.75px; letter-spacing: -0.25px; line-height: 36px; }
.side-list { margin-top: 17px; color: #59636e; }
.side-item { display: flex; align-items: center; gap: 18px; height: 43.5px; }
.report { display: block; line-height: 43.5px; }
```
